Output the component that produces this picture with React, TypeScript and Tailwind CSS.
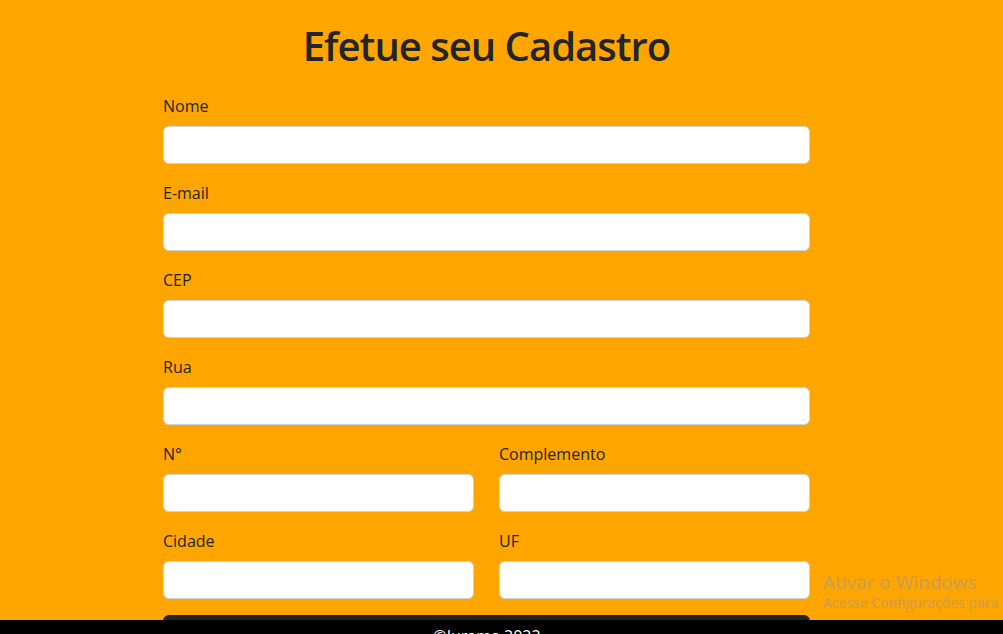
export default function App() {
  const Field = ({ label }: { label: string }) => (
    <div className="mb-[17px]">
      <label className="block text-[16px] leading-6 mb-2 text-[#212529]">{label}</label>
      <input className="block w-full h-[38px] rounded-[6px] border border-[#ced4da] bg-white px-3 outline-none" />
    </div>
  );
  return (
    <div
      className="min-h-[634px] bg-[#ffa500] text-[#212529] relative overflow-hidden"
      style={{ fontFamily: '"Open Sans", "Noto Sans", sans-serif' }}
    >
      <div className="w-[974px]">
        <div className="ml-[163px] w-[647px] pt-[22px]">
          <h1 className="text-center text-[40px] leading-[48px] font-semibold tracking-[-1px] mb-6">
            Efetue seu Cadastro
          </h1>
          <Field label="Nome" />
          <Field label="E-mail" />
          <Field label="CEP" />
          <Field label="Rua" />
          <div className="grid grid-cols-2 gap-x-[25px]">
            <Field label="N°" />
            <Field label="Complemento" />
            <Field label="Cidade" />
            <Field label="UF" />
          </div>
          <button className="block w-full h-[38px] rounded-[6px] bg-[#212529] -mt-px"></button>
        </div>
      </div>
      <div className="absolute left-[823px] top-[570px] text-[#c79f57] whitespace-nowrap pointer-events-none">
        <div className="text-[19px] leading-[24px]">Ativar o Windows</div>
        <div className="text-[14px] leading-[18px]">Acesse Configurações para</div>
      </div>
      <footer className="absolute left-0 top-[620px] w-[1003px] h-[60px] bg-black">
        <div className="w-[974px] text-center text-white text-[16px] leading-6 pt-[4px]">©Jurama 2022</div>
      </footer>
    </div>
  );
}
